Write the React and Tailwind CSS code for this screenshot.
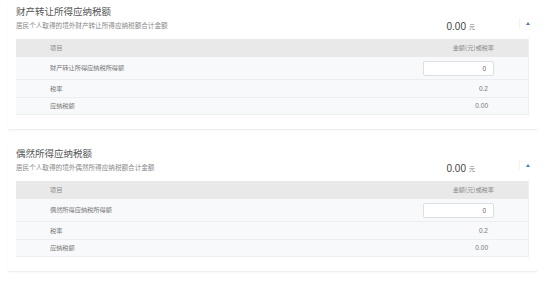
const sections = [
  {
    title: "财产转让所得应纳税额",
    desc: "居民个人取得的境外财产转让所得应纳税额合计金额",
    label: "财产转让所得应纳税所得额",
  },
  {
    title: "偶然所得应纳税额",
    desc: "居民个人取得的境外偶然所得应纳税额合计金额",
    label: "偶然所得应纳税所得额",
  },
];

function TaxSection({ title, desc, label, first }) {
  return (
    <section
      className={`pt-[4px] pb-[14px] border-b border-[#eeeff1] shadow-[0_1px_2px_rgba(0,0,0,0.03)] ${
        first ? "" : "mt-[12px]"
      }`}
    >
      <div className="flex items-start h-[25px]">
        <div className="flex-1 pl-[8px]">
          <h3 className="text-[9.5px] leading-[14px] text-[#555] font-normal">{title}</h3>
          <p className="mt-[3px] text-[6.6px] leading-[8px] text-[#888]">{desc}</p>
        </div>
        <div className="flex items-center pt-[17px] pr-[44px]">
          <span className="text-[10px] leading-[12px] text-[#444] font-['Liberation_Sans',sans-serif]">
            0.00
          </span>
          <span className="ml-[3px] text-[6px] leading-[12px] text-[#777]">元</span>
        </div>
        <div className="flex items-center pt-[14px] pr-[7px]">
          <span className="w-px h-[10px] bg-[#f1f2f4] mr-[6px]" />
          <span className="w-0 h-0 border-l-[2.5px] border-r-[2.5px] border-b-[3px] border-l-transparent border-r-transparent border-b-[#4a7fc1]" />
        </div>
      </div>

      <div className="mt-[10px] ml-[8px] w-[513px] border-r border-[#eceef1] text-[6.2px] text-[#777]">
        <div className="flex items-center justify-between h-[18px] bg-[#e9e9e9] pl-[34px] pr-[34px] text-[#8a8a8a]">
          <span>项目</span>
          <span>金额(元)或税率</span>
        </div>
        <div className="flex items-center justify-between h-[23px] bg-[#f8f9fb] border-b border-[#eceef1] pl-[34px] pr-[34px]">
          <span>{label}</span>
          <input
            readOnly
            value="0"
            className="w-[71px] h-[15px] bg-white border border-[#dcdfe3] rounded-[2px] text-right pr-[7px] text-[6.5px] text-[#666] font-['Liberation_Sans',sans-serif] outline-none"
          />
        </div>
        <div className="flex items-center justify-between h-[18px] bg-[#f8f9fb] border-b border-[#eceef1] pl-[34px] pr-[40px]">
          <span>税率</span>
          <span className="text-[6.5px] text-[#777] font-['Liberation_Sans',sans-serif]">0.2</span>
        </div>
        <div className="flex items-center justify-between h-[17px] bg-[#f8f9fb] border-b border-[#eceef1] pl-[34px] pr-[40px]">
          <span>应纳税额</span>
          <span className="text-[6.5px] text-[#777] font-['Liberation_Sans',sans-serif]">0.00</span>
        </div>
      </div>
    </section>
  );
}

export default function App() {
  return (
    <div className="w-[553px] h-[288px] overflow-hidden bg-white font-['Noto_Sans_CJK_SC','Noto_Sans',sans-serif]">
      <div className="w-[529px] ml-[8px]">
        {sections.map((s, i) => (
          <TaxSection key={s.title} {...s} first={i === 0} />
        ))}
      </div>
    </div>
  );
}
